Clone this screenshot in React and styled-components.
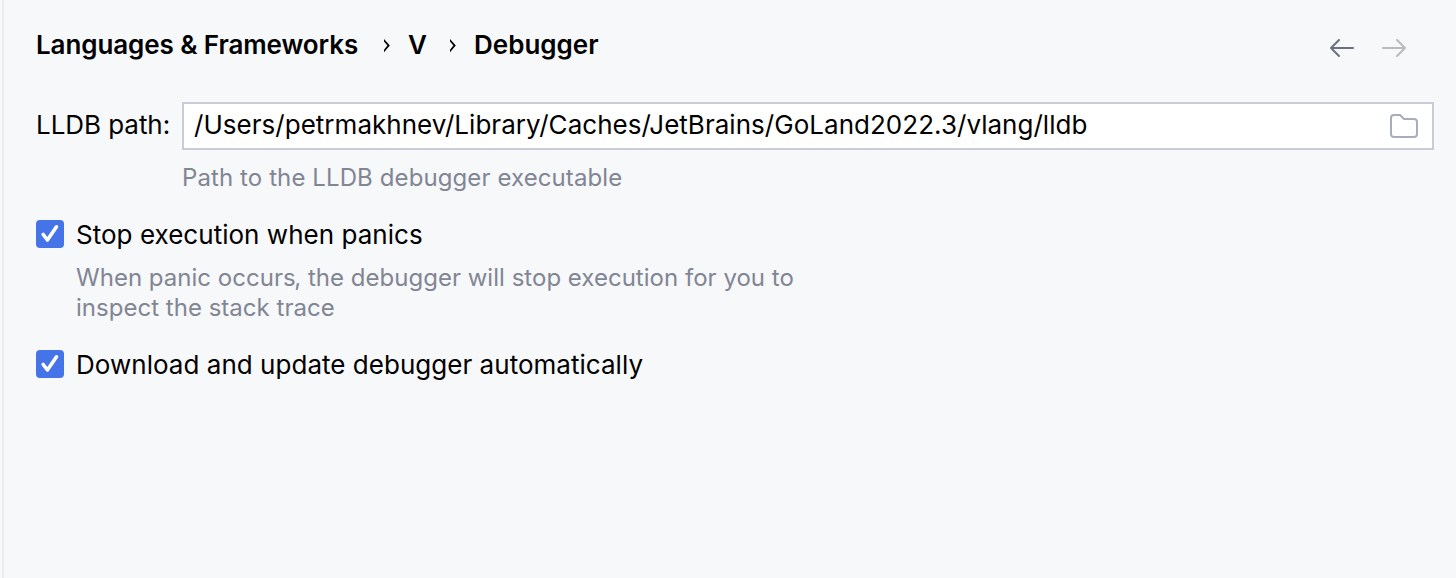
import React from 'react';
import styled, { createGlobalStyle } from 'styled-components';

const Global = createGlobalStyle`
  * { box-sizing: border-box; }
  body { margin: 0; background: #f7f8fa; font-family: Inter, sans-serif; font-size: 26px; color: #000; }
`;

const Panel = styled.main`
  height: 578px;
  margin-left: 2px;
  border-left: 2px solid #ebecf0;
  padding: 28px 22px 0 32px;
  overflow: hidden;
`;

const Header = styled.header`
  display: flex;
  justify-content: space-between;
  align-items: flex-start;
  height: 74px;
`;

const Crumbs = styled.nav`
  display: flex;
  align-items: center;
  line-height: 34px;
  font-weight: 600;
`;

const Crumb = styled.span`
  width: ${(p) => p.$width}px;
  white-space: nowrap;
  letter-spacing: ${(p) => p.$spacing || 0}px;
`;

const SeparatorIcon = styled.svg`
  width: 8px;
  height: 14px;
  margin: 2px ${(p) => p.$after}px 0 ${(p) => p.$before}px;
  fill: #000;
`;

const History = styled.div`
  display: flex;
  gap: 24px;
  padding: 8px 26px 0 0;
`;

const Arrow = styled.svg`
  width: 28px;
  height: 24px;
  fill: none;
  stroke: ${(p) => p.$color};
  stroke-width: 2;
  stroke-linecap: round;
  stroke-linejoin: round;
`;

const Field = styled.div`
  display: flex;
  align-items: center;
`;

const Label = styled.label`
  width: 146px;
  line-height: 46px;
  padding-bottom: 2px;
  white-space: nowrap;
  letter-spacing: -0.05px;
`;

const PathBox = styled.div`
  flex: 1;
  height: 48px;
  display: flex;
  align-items: center;
  justify-content: space-between;
  padding: 0 14px 0 10px;
  background: #fff;
  border: 2px solid #c9ccd6;
`;

const PathText = styled.span`
  line-height: 42px;
  padding-bottom: 2px;
  white-space: nowrap;
  letter-spacing: 0.03px;
`;

const Folder = styled.svg`
  width: 28px;
  height: 24px;
  fill: none;
  stroke: #a8adbd;
  stroke-width: 2;
  stroke-linejoin: round;
`;

const Hint = styled.p`
  margin: ${(p) => p.$top}px 0 0 ${(p) => p.$indent}px;
  font-size: 24px;
  line-height: 30px;
  color: #818594;
  white-space: nowrap;
  letter-spacing: ${(p) => p.$spacing || 0}px;
`;

const Comma = styled.span`
  margin-left: -1.5px;
`;

const Option = styled.div`
  display: flex;
  align-items: center;
  gap: 12px;
  height: 34px;
  margin-top: ${(p) => p.$top}px;
`;

const Check = styled.svg`
  width: 28px;
  height: 28px;
  margin-bottom: 1px;
  background: #4573e8;
  border-radius: 4px;
  fill: none;
  stroke: #fff;
  stroke-width: 3.6;
  stroke-linecap: round;
  stroke-linejoin: round;
`;

const OptionText = styled.span`
  white-space: nowrap;
  letter-spacing: 0.03px;
`;

function Separator({ before, after }) {
  return (
    <SeparatorIcon $before={before} $after={after} viewBox="0 0 8 14">
      <path d="M2 0 7.8 6.6 2 13.3V10.8L5.4 6.6 2 2.5Z" />
    </SeparatorIcon>
  );
}

function CheckOption({ top, children }) {
  return (
    <Option $top={top}>
      <Check viewBox="0 0 28 28"><path d="M7.2 14.5 11.4 20 20.5 6.8" /></Check>
      <OptionText>{children}</OptionText>
    </Option>
  );
}

export default function App() {
  return (
    <>
      <Global />
      <Panel>
        <Header>
          <Crumbs>
            <Crumb $width={322} $spacing={-0.09}>Languages &amp; Frameworks</Crumb>
            <Separator before={24} after={18} />
            <Crumb $width={18}>V</Crumb>
            <Separator before={22} after={18} />
            <Crumb $width={124}>Debugger</Crumb>
          </Crumbs>
          <History>
            <Arrow $color="#6c707e" viewBox="0 0 28 24"><path d="M25 12H3M11 4 3 12l8 8" /></Arrow>
            <Arrow $color="#b9bbbf" viewBox="0 0 28 24"><path d="M3 12h22M17 4l8 8-8 8" /></Arrow>
          </History>
        </Header>
        <Field>
          <Label>LLDB path:</Label>
          <PathBox>
            <PathText>/Users/petrmakhnev/Library/Caches/JetBrains/GoLand2022.3/vlang/lldb</PathText>
            <Folder viewBox="0 0 28 24"><path d="M1 4a3 3 0 0 1 3-3h6l4 4h10a3 3 0 0 1 3 3v12a3 3 0 0 1-3 3H4a3 3 0 0 1-3-3Z" /></Folder>
          </PathBox>
        </Field>
        <Hint $top={13} $indent={146} $spacing={0.1}>Path to the LLDB debugger executable</Hint>
        <CheckOption top={24}>Stop execution when panics</CheckOption>
        <Hint $top={12} $indent={40} $spacing={0.02}>When panic occurs<Comma>,</Comma> the debugger will stop execution for you to<br />inspect the stack trace</Hint>
        <CheckOption top={24}>Download and update debugger automatically</CheckOption>
      </Panel>
    </>
  );
}
